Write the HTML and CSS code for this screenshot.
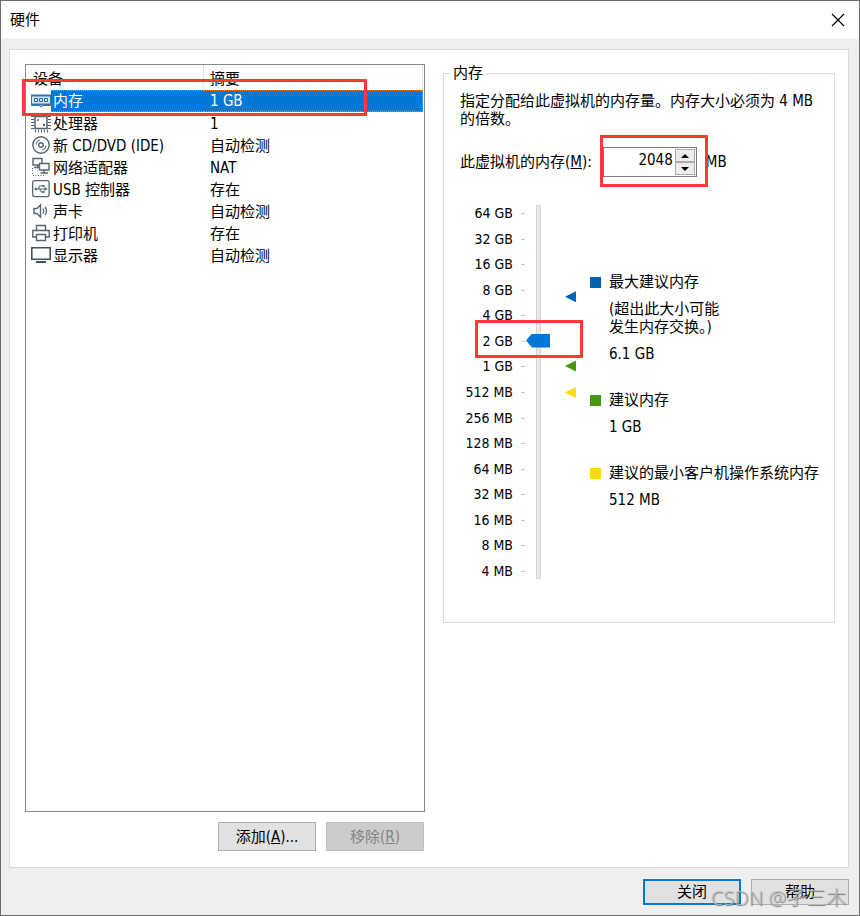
FILE: index.html
```html
<!DOCTYPE html>
<html lang="zh-CN">
<head>
  <meta charset="UTF-8">
  <title>硬件</title>
  <meta name="viewport" content="width=device-width, initial-scale=1.0">
  <link rel="stylesheet" href="styles.css">
</head>
<body>
  <div class="window">
    <header class="titlebar">
      <h1>硬件</h1>
      <button class="close" type="button" aria-label="关闭">
        <svg width="14" height="14" viewBox="0 0 14 14"><path d="M1 1L13 13M13 1L1 13" stroke="#000" stroke-width="1.2" fill="none"/></svg>
      </button>
    </header>

    <main class="panel">
      <!-- Device list -->
      <section class="devices">
        <div class="list">
          <table>
            <colgroup>
              <col class="col-icon">
              <col class="col-name">
              <col>
            </colgroup>
            <thead>
              <tr><th class="name" colspan="2">设备</th><th class="summary">摘要</th></tr>
            </thead>
            <tbody>
              <tr class="selected">
                <td class="icon"><svg width="20" height="20" viewBox="0 0 20 20" fill="none"><path d="M0.5 4.5H19.5V14.5H12L10 16L8 14.5H0.5Z" fill="#d5e5f0" stroke="#3674a3"/><path d="M0 4.5H20M0 13.5H20" stroke="#3674a3" stroke-width="2"/><path d="M3.5 7.5H6.5V10.5H3.5ZM8.5 7.5H11.5V10.5H8.5ZM13.5 7.5H16.5V10.5H13.5Z" stroke="#27638f"/></svg></td>
                <td>内存</td><td>1 GB</td>
              </tr>
              <tr>
                <td class="icon"><svg width="20" height="20" viewBox="0 0 20 20" fill="none" stroke="#546673"><path d="M4 3.5H16V15.5H4Z" stroke-width="1.6"/><path d="M1.5 3V17M18.5 3V17" stroke-width="3" stroke-dasharray="1 2"/><path d="M4 18H17" stroke-width="3" stroke-dasharray="1 2"/><circle cx="7" cy="7" r="1" fill="#546673" stroke="none"/><circle cx="13" cy="12" r="1.2" fill="#546673" stroke="none"/></svg></td>
                <td>处理器</td><td>1</td>
              </tr>
              <tr>
                <td class="icon"><svg width="20" height="20" viewBox="0 0 20 20" fill="none" stroke="#546673"><circle cx="10" cy="10" r="8.2" stroke-width="1.4"/><circle cx="10" cy="10" r="2.3" stroke-width="1.4"/><path d="M5 9.5A5 5 0 0 1 9 5M15 10.5A5 5 0 0 1 11 15"/></svg></td>
                <td>新 CD/DVD (IDE)</td><td>自动检测</td>
              </tr>
              <tr>
                <td class="icon"><svg width="20" height="20" viewBox="0 0 20 20" fill="none" stroke="#546673"><path d="M2 1.5H11V8H2ZM6.5 8V10.5M3 10.5H8" stroke-width="1.4"/><path d="M8.5 6.5H18V13H8.5Z" fill="#fff" stroke-width="1.4"/><path d="M13 13V16M9.5 16H17" stroke-width="1.4"/><path d="M1.5 11V18M2 18.5H13" stroke-dasharray="1 1.5"/></svg></td>
                <td>网络适配器</td><td>NAT</td>
              </tr>
              <tr>
                <td class="icon"><svg width="20" height="20" viewBox="0 0 20 20" fill="none" stroke="#546673"><rect x="1.6" y="1.6" width="16.5" height="16" rx="2" stroke-width="1.3"/><path d="M5 10H14M7 10L9 7H12M8.5 10L10.5 13H12" stroke-width="1.1"/><circle cx="4.8" cy="10" r="1.3" fill="#546673" stroke="none"/><path d="M13.5 8L16.5 10L13.5 12ZM11.5 6H13.5V8H11.5ZM11.5 12H13.5V14H11.5Z" fill="#546673" stroke="none"/></svg></td>
                <td>USB 控制器</td><td>存在</td>
              </tr>
              <tr>
                <td class="icon"><svg width="20" height="20" viewBox="0 0 20 20" fill="none" stroke="#546673"><path d="M3 7.5H6L9.5 4V16L6 12.5H3Z" stroke-width="1.4"/><path d="M12 7.5Q13.5 10 12 12.5M14 6Q17 10 14 14" stroke-width="1.3"/></svg></td>
                <td>声卡</td><td>自动检测</td>
              </tr>
              <tr>
                <td class="icon"><svg width="20" height="20" viewBox="0 0 20 20" fill="none" stroke="#546673" stroke-width="1.4"><path d="M5.5 7V2.5H14.5V7M5.5 14H1.8V7.5H18.2V14H14.5M5.5 11.5H14.5V17.5H5.5Z"/></svg></td>
                <td>打印机</td><td>存在</td>
              </tr>
              <tr>
                <td class="icon"><svg width="20" height="20" viewBox="0 0 20 20" fill="none" stroke="#3f5260"><path d="M0.8 2.8H19.2V14.2H0.8Z" stroke-width="1.6"/><path d="M5 17H15" stroke-width="2"/></svg></td>
                <td>显示器</td><td>自动检测</td>
              </tr>
            </tbody>
          </table>
          <span class="mark mark-row"></span>
        </div>
        <div class="buttons">
          <button type="button">添加(<u>A</u>)...</button>
          <button type="button" disabled>移除(<u>R</u>)</button>
        </div>
      </section>

      <!-- Memory settings -->
      <fieldset class="memory">
        <legend>内存</legend>
        <p>指定分配给此虚拟机的内存量。内存大小必须为 4 MB 的倍数。</p>

        <div class="amount">
          <label for="memory">此虚拟机的内存(<u>M</u>):</label>
          <div class="spinner">
            <input type="text" id="memory" value="2048">
            <div class="steps">
              <button type="button" aria-label="增加"><svg width="8" height="4" viewBox="0 0 8 4"><path d="M0 4L4 0L8 4Z"/></svg></button>
              <button type="button" aria-label="减少"><svg width="8" height="4" viewBox="0 0 8 4"><path d="M0 0L4 4L8 0Z"/></svg></button>
            </div>
            <span class="mark mark-amount"></span>
          </div>
          <span class="unit">MB</span>
        </div>

        <div class="sizing">
          <div class="scale">
            <ul class="ticks">
              <li>64 GB</li>
              <li>32 GB</li>
              <li>16 GB</li>
              <li>8 GB</li>
              <li>4 GB</li>
              <li>2 GB</li>
              <li>1 GB</li>
              <li>512 MB</li>
              <li>256 MB</li>
              <li>128 MB</li>
              <li>64 MB</li>
              <li>32 MB</li>
              <li>16 MB</li>
              <li>8 MB</li>
              <li>4 MB</li>
            </ul>
            <input class="slider" type="range" min="0" max="14" value="9" aria-label="内存大小">
            <div class="pointers">
              <i class="pointer blue" style="top: 24.4%"></i>
              <i class="pointer green" style="top: 42.9%"></i>
              <i class="pointer yellow" style="top: 50%"></i>
            </div>
            <span class="mark mark-scale"></span>
          </div>

          <dl class="key">
            <div class="blue">
              <dt>最大建议内存</dt>
              <dd>(超出此大小可能<br>发生内存交换。)</dd>
              <dd>6.1 GB</dd>
            </div>
            <div class="green">
              <dt>建议内存</dt>
              <dd>1 GB</dd>
            </div>
            <div class="yellow">
              <dt>建议的最小客户机操作系统内存</dt>
              <dd>512 MB</dd>
            </div>
          </dl>
        </div>
      </fieldset>
    </main>

    <footer class="footer">
      <button class="default" type="button">关闭</button>
      <button type="button">帮助</button>
      <span class="watermark">CSDN @孑三木</span>
    </footer>
  </div>
</body>
</html>
```
FILE: styles.css
```css
/* Base */
* {
  box-sizing: border-box;
}
body {
  margin: 0;
  font-family: "DejaVu Sans Condensed", "Noto Sans CJK SC", sans-serif;
  font-size: 15px;
  line-height: 18px;
  color: #000;
}
button, input {
  font: inherit;
  color: inherit;
}
.window {
  display: flex;
  flex-direction: column;
  min-height: 100vh;
  border: 1px solid #6b6b6b;
  background: #efefef;
}

/* Title bar */
.titlebar {
  display: flex;
  align-items: center;
  justify-content: space-between;
  height: 37px;
  padding: 0 14px 0 9px;
  background: #fff;
}
.titlebar h1 {
  margin: 0;
  font-size: 15px;
  font-weight: 400;
}
.close {
  display: flex;
  padding: 0;
  border: 0;
  background: none;
}

/* Main panel */
.panel {
  display: flex;
  flex: 1;
  gap: 18px;
  margin: 11px 10px 0 8px;
  padding: 14px 13px 16px 15px;
  border: 1px solid #d9d9d9;
  background: #fff;
}

/* Device list */
.devices {
  display: flex;
  flex-direction: column;
  flex: 1;
}
.list {
  position: relative;
  flex: 1;
  padding: 0 1px 0 5px;
  border: 1px solid #828790;
}
table {
  width: 100%;
  border-collapse: separate;
  border-spacing: 0;
  table-layout: fixed;
}
.col-icon {
  width: 20px;
}
.col-name {
  width: 153px;
}
th, td {
  height: 22px;
  padding: 1px 0 0 2px;
  text-align: left;
  font-weight: inherit;
  white-space: nowrap;
}
th {
  height: 25px;
  padding-top: 2px;
  border-right: 1px solid #e5e5e5;
}
.summary, td:last-child {
  padding-left: 6px;
}
.icon {
  padding: 0;
}
.icon svg {
  display: block;
}
.selected td:not(.icon) {
  padding-top: 0;
  background: #0078d7;
  color: #fff;
  border-top: 1px dotted #ff8728;
  border-bottom: 1px dotted #ff8728;
}
.selected td:last-child {
  border-right: 1px dotted #ff8728;
}
.buttons {
  display: flex;
  justify-content: flex-end;
  gap: 10px;
  margin-top: 10px;
  padding-right: 1px;
}
.buttons button, .footer button {
  width: 98px;
  height: 29px;
  padding: 0;
  border: 1px solid #adadad;
  background: #e1e1e1;
}
.buttons button:disabled {
  border-color: #bfbfbf;
  background: #ccc;
  color: #838383;
}

/* Memory settings */
.memory {
  align-self: flex-start;
  width: 392px;
  min-height: 559px;
  margin: 0;
  padding: 10px 14px 43px 16px;
  border: 1px solid #dcdcdc;
}
.memory legend {
  margin-left: -10px;
  padding: 0 3px;
}
.memory p {
  margin: 0;
}
.amount {
  display: flex;
  align-items: center;
  margin-top: 19px;
}
.spinner {
  position: relative;
  display: flex;
  width: 94px;
  height: 30px;
  margin: 0 9px 0 11px;
  padding: 1px;
  border: 1px solid #7a7a7a;
}
.spinner input {
  flex: 1;
  min-width: 0;
  padding: 0 2px 4px 0;
  border: 0;
  text-align: right;
}
.steps {
  display: flex;
  flex-direction: column;
  width: 20px;
}
.steps button {
  display: flex;
  align-items: center;
  justify-content: center;
  flex: 1;
  padding: 0;
  border: 1px solid #acacac;
  background: #ececec;
}

/* Size slider */
.sizing {
  display: flex;
  margin-top: 28px;
}
.scale {
  position: relative;
  display: flex;
  width: 117px;
  height: 374px;
}
.ticks {
  display: flex;
  flex-direction: column;
  justify-content: space-between;
  width: 65px;
  margin: -1px 0;
  padding: 0;
  list-style: none;
  font-size: 14px;
  text-align: right;
}
.ticks li::after {
  content: "";
  display: inline-block;
  width: 4px;
  height: 1px;
  margin-left: 8px;
  vertical-align: 4px;
  background: #c4c4c4;
}
.slider {
  appearance: none;
  writing-mode: vertical-lr;
  direction: rtl;
  width: 24px;
  height: 100%;
  margin: 0 0 0 1px;
  background:
    linear-gradient(#e7eaea, #e7eaea) 11px center / 3px calc(100% - 2px) no-repeat,
    linear-gradient(#d6d6d6, #d6d6d6) 10px center / 5px 100% no-repeat;
}
.slider::-webkit-slider-thumb {
  appearance: none;
  width: 24px;
  height: 14px;
  background: #0078d7;
  clip-path: polygon(0 50%, 25% 0, 100% 0, 100% 100%, 25% 100%);
}
.pointers {
  position: relative;
  width: 11px;
  margin-left: 15px;
}
.pointer {
  position: absolute;
  width: 11px;
  height: 11px;
  margin-top: -5px;
  background: var(--color);
  clip-path: polygon(0 50%, 100% 0, 100% 100%);
}
.blue {
  --color: #0063b1;
}
.green {
  --color: #47970c;
}
.yellow {
  --color: #ffdb0b;
}

/* Colour key */
.key {
  margin: 68px 0 0 13px;
  white-space: nowrap;
}
.key div {
  margin-bottom: 28px;
}
.key dt {
  display: flex;
  align-items: center;
  gap: 8px;
}
.key dt::before {
  content: "";
  width: 11px;
  height: 11px;
  background: var(--color);
}
.key dd {
  margin: 9px 0 0 19px;
}

/* Red highlight boxes */
.mark {
  position: absolute;
  border: 3px solid #ff3838;
  pointer-events: none;
}
.mark-row {
  top: 14px;
  left: -4px;
  width: 345px;
  height: 37px;
}
.mark-amount {
  top: -13px;
  left: -4px;
  width: 108px;
  height: 52px;
}
.mark-scale {
  top: 115px;
  left: 15px;
  width: 108px;
  height: 38px;
}

/* Footer */
.footer {
  position: relative;
  display: flex;
  justify-content: flex-end;
  gap: 10px;
  padding: 11px 10px 10px;
}
.footer button {
  height: 26px;
}
.footer .default {
  border: 2px solid #0078d7;
}
.watermark {
  position: absolute;
  right: 13px;
  bottom: 7px;
  font-family: "Noto Sans", "Noto Sans CJK SC", sans-serif;
  font-size: 20px;
  font-weight: 300;
  line-height: 20px;
  color: rgba(190, 190, 190, 0.8);
  text-shadow: 1px 1px 1px #777;
}
```
